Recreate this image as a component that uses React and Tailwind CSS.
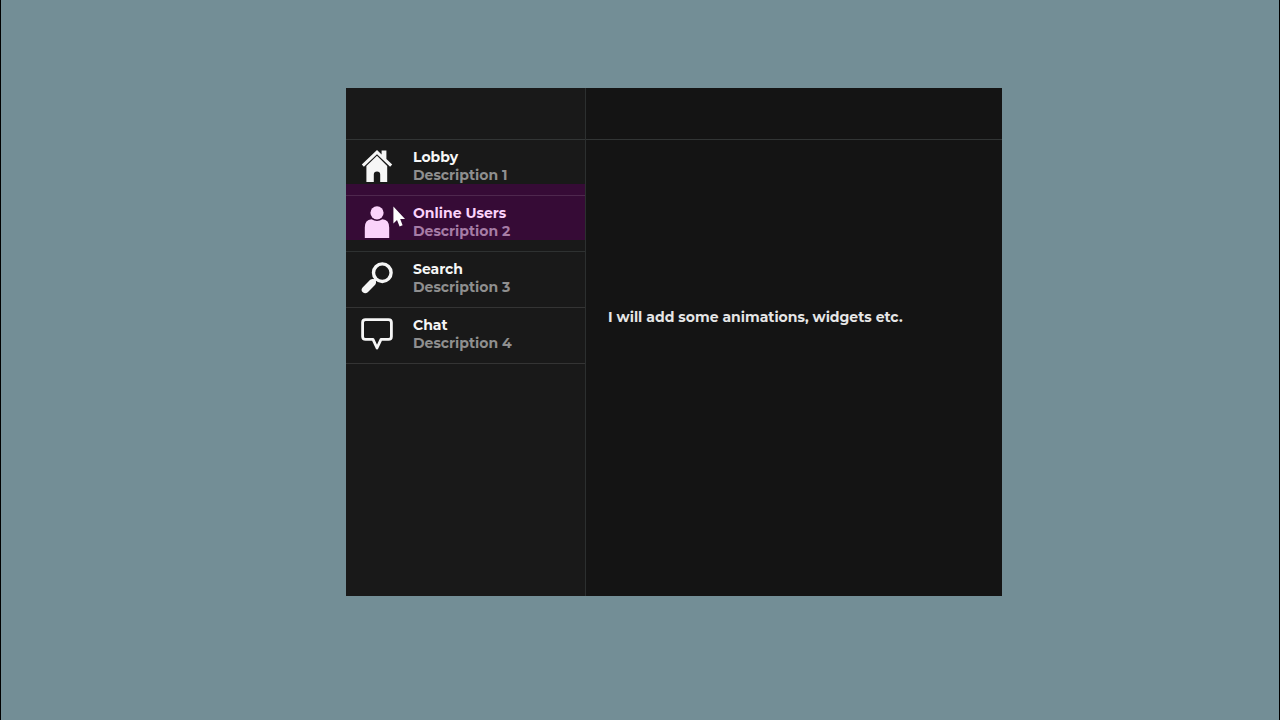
import React from 'react';

const HomeIcon = () => (
  <svg viewBox="0 0 32 32" className="w-8 h-8" fill="currentColor" aria-hidden="true">
    <path d="M16 0 0.8 14.6 2.9 16.8 16 4.2 29.1 16.8 31.2 14.6 25.4 9V0.6H20.6V4.4Z" />
    <path d="M16 5.8 5.4 16V32H12.8V24.5Q12.8 21.5 16 21.5T19.2 24.5V32H26.2V16Z" />
  </svg>
);

const UserIcon = () => (
  <svg viewBox="0 0 32 32" className="w-8 h-8" fill="currentColor" aria-hidden="true">
    <circle cx="16" cy="6.8" r="6.6" />
    <path d="M3.8 32V21.5Q3.8 13.6 10.5 13.2Q16 16.6 21.5 13.2Q28.2 13.6 28.2 21.5V32Z" />
  </svg>
);

const SearchIcon = () => (
  <svg viewBox="0 0 32 32" className="w-8 h-8" fill="none" stroke="currentColor" aria-hidden="true">
    <circle cx="21.3" cy="10.7" r="8.8" strokeWidth="3.4" />
    <path d="M15.4 16.6 12 20" strokeWidth="3" />
    <path
      d="M9.2 17.8Q12 16 14 18T14.2 22.8L6.8 30.2Q4.2 32.2 1.8 30.2T1.6 25.4Z"
      fill="currentColor"
      stroke="none"
    />
  </svg>
);

const ChatIcon = () => (
  <svg viewBox="0 0 32 32" className="w-8 h-8" fill="none" stroke="currentColor" strokeWidth="2.8" strokeLinejoin="round" aria-hidden="true">
    <path d="M4.5 1.6H27.5Q30.4 1.6 30.4 4.5V18.5Q30.4 21.4 27.5 21.4H20L16 30 12 21.4H4.5Q1.6 21.4 1.6 18.5V4.5Q1.6 1.6 4.5 1.6Z" />
  </svg>
);

const Cursor = () => (
  <svg viewBox="0 0 12 21" className="absolute left-[47px] top-2.5 w-3 h-[21px]" aria-hidden="true">
    <path d="M0.4 0.6V17.4L4 14 6.6 20.4 9.6 19.2 7.2 13H12Z" fill="#fff" />
  </svg>
);

const items = [
  { title: 'Lobby', description: 'Description 1', icon: HomeIcon },
  { title: 'Online Users', description: 'Description 2', icon: UserIcon, active: true },
  { title: 'Search', description: 'Description 3', icon: SearchIcon },
  { title: 'Chat', description: 'Description 4', icon: ChatIcon },
];

const Sidebar = () => (
  <nav className="w-60 shrink-0 bg-[#191919] border-r border-[#2c2f2f]">
    <div className="h-[52px] border-b border-[#323535]" />
    <div className="relative">
      <div className="absolute inset-x-0 top-11 h-14 bg-[#360b36]" />
      <ul className="relative">
        {items.map(({ title, description, icon: Icon, active }) => (
          <li key={title} className="relative">
            <button
              type="button"
              className={
                active
                  ? 'w-full h-14 flex items-start pl-[15px] border-b border-[#2e3131] text-left text-[#fbd3fb]'
                  : 'w-full h-14 flex items-start pl-[15px] border-b border-white/12 text-left text-[#f6f6f6]'
              }
            >
              <span className="mt-2.5 mr-5">
                <Icon />
              </span>
              <span className="pt-2 text-[14px] leading-[18px] font-bold">
                <span className="block">{title}</span>
                <span className={active ? 'block text-[#a67ca6]' : 'block text-[#8f8f8f]'}>{description}</span>
              </span>
            </button>
            {active && <Cursor />}
          </li>
        ))}
      </ul>
    </div>
  </nav>
);

const Content = () => (
  <main className="flex-1 min-w-0 bg-[#141414]">
    <div className="h-[52px] border-b border-[#323535]" />
    <p className="pt-[168px] px-[22px] text-[14px] leading-[18px] font-bold text-[#e6e6e6]">
      I will add some animations, widgets etc.
    </p>
  </main>
);

export default function App() {
  return (
    <div className="min-h-screen grid grid-cols-[345fr_656fr_277fr] grid-rows-[88fr_508fr_124fr] bg-[#738e96] border-x border-black font-[Montserrat,Inter,sans-serif]">
      <div className="col-start-2 row-start-2 flex">
        <Sidebar />
        <Content />
      </div>
    </div>
  );
}
